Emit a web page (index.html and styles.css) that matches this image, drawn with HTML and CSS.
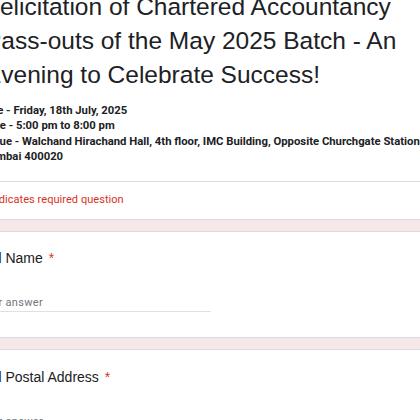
FILE: index.html
```html
<!DOCTYPE html>
<html>
<head>
<meta charset="utf-8">
<link rel="stylesheet" href="styles.css">
</head>
<body>
<div class="form">
  <div class="card header">
    <div class="title">Felicitation of Chartered Accountancy Pass-outs of the May 2025 Batch - An Evening to Celebrate Success!</div>
    <div class="desc">Date - Friday, 18th July, 2025<br>Time - 5:00 pm to 8:00 pm<br>Venue - Walchand Hirachand Hall, 4th floor, IMC Building, Opposite Churchgate Station, Mumbai 400020</div>
    <div class="required">* Indicates required question</div>
  </div>
  <div class="card question">
    <div class="label">Full Name <span class="star">*</span></div>
    <div class="input">Your answer</div>
  </div>
  <div class="card question">
    <div class="label">Full Postal Address <span class="star">*</span></div>
    <div class="input">Your answer</div>
  </div>
</div>
</body>
</html>
```

FILE: styles.css
```css
html, body {
  margin: 0;
  padding: 0;
  overflow: hidden;
  background: #f6e8e8;
}
.form {
  margin: -10px 0 0 -46px;
  width: 560px;
  display: flex;
  flex-direction: column;
  gap: 11px;
}
.card {
  background: #fff;
  border: 1px solid #dadce0;
  border-radius: 8px;
}
.header {
  border-top: none;
  padding: 0 0 0 25px;
}
.title {
  margin-left: 5px;
  font-family: "Liberation Sans", Arial, sans-serif;
  font-size: 24.5px;
  line-height: 34px;
  color: #202124;
  width: 440px;
}
.desc {
  margin-top: 10.5px;
  font-family: Roboto, "Noto Sans", sans-serif;
  font-weight: bold;
  font-size: 11.3px;
  line-height: 15.5px;
  color: #202124;
  width: 460px;
  padding-bottom: 16px;
}
.required {
  border-top: 1px solid #dadce0;
  margin-left: -25px;
  padding: 10px 0 12px 27px;
  font-family: Roboto, "Noto Sans", sans-serif;
  font-size: 11px;
  line-height: 15px;
  letter-spacing: 0.05px;
  color: #d93025;
}
.question {
  padding: 16px 0 25px 24px;
}
.question + .question {
  padding-top: 17px;
}
.label {
  font-family: "Liberation Sans", Arial, sans-serif;
  font-size: 14px;
  line-height: 20px;
  color: #202124;
}
.star {
  color: #d93025;
  margin-left: 2px;
}
.input {
  margin-top: 27px;
  width: 232px;
  padding-bottom: 1px;
  border-bottom: 1px solid #e0e0e0;
  font-family: Roboto, "Noto Sans", sans-serif;
  font-size: 11px;
  line-height: 15px;
  letter-spacing: 0.3px;
  color: #70757a;
}
```
